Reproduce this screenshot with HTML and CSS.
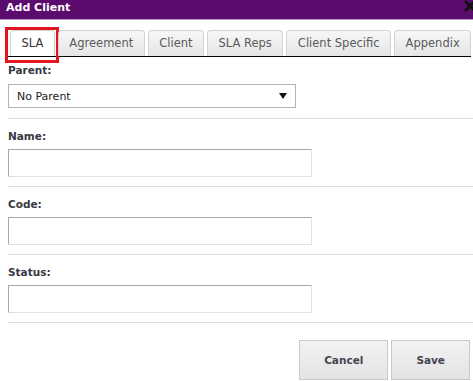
FILE: index.html
```html
<!DOCTYPE html>
<html lang="en">
<head>
    <meta charset="UTF-8">
    <meta name="viewport" content="width=device-width, initial-scale=1.0">
    <title>Add Client</title>
    <link rel="stylesheet" href="styles.css">
</head>
<body>
<!-- Barra de titulo -->
<div class="dialog-header">
    <span class="dialog-title">Add Client</span>
    <svg class="dialog-close" width="12" height="12" viewBox="0 0 12 12" aria-label="Close">
        <path d="M2 2 L10 10 M10 2 L2 10" stroke="#111111" stroke-width="3" stroke-linecap="square"/>
    </svg>
</div>

<!-- Abas -->
<div class="tabs">
    <div class="tab active">SLA<span class="highlight"></span></div>
    <div class="tab">Agreement</div>
    <div class="tab">Client</div>
    <div class="tab">SLA Reps</div>
    <div class="tab">Client Specific</div>
    <div class="tab">Appendix</div>
</div>

<!-- Campos -->
<form class="form">
    <div class="field first">
        <label class="field-label" for="parent">Parent:</label>
        <div class="select-wrap">
            <select id="parent" class="field-select">
                <option>No Parent</option>
            </select>
        </div>
    </div>
    <div class="field">
        <label class="field-label" for="name">Name:</label>
        <input id="name" class="field-input" type="text">
    </div>
    <div class="field">
        <label class="field-label" for="code">Code:</label>
        <input id="code" class="field-input" type="text">
    </div>
    <div class="field">
        <label class="field-label" for="status">Status:</label>
        <input id="status" class="field-input" type="text">
    </div>

    <div class="actions">
        <button type="button" class="btn">Cancel</button>
        <button type="button" class="btn">Save</button>
    </div>
</form>
</body>
</html>
```

FILE: styles.css
```css
body {
    margin: 0;
    padding: 0;
    font-family: "DejaVu Sans", Verdana, sans-serif;
    background-color: #FFFFFF;
    overflow: hidden;
}

/* Barra de titulo roxa */
.dialog-header {
    position: relative;
    height: 19px;
    padding: 0 6px;
    background-color: #5b0a6d;
    border-bottom: 1px solid #b995c4;
}

.dialog-title {
    display: block;
    line-height: 15px;
    font-size: 11px;
    font-weight: bold;
    color: #FFFFFF;
}

.dialog-close {
    position: absolute;
    top: 0;
    right: -3px;
}

/* Abas */
.tabs {
    display: flex;
    gap: 3px;
    margin: 10px 2px 0 5px;
    padding-left: 5px;
    border-bottom: 1px solid #000000;
}

.tab {
    position: relative;
    flex-shrink: 0;
    height: 25px;
    padding: 0 10.5px;
    line-height: 25px;
    font-size: 11.5px;
    white-space: nowrap;
    color: #5a5a5a;
    border: 1px solid #d2d2d2;
    border-bottom: none;
    border-radius: 4px 4px 0 0;
    background: linear-gradient(#f7f7f7, #e5e5e5);
}

.tab.active {
    background: #FFFFFF;
    color: #333333;
}

/* Marca vermelha em volta da aba ativa */
.highlight {
    position: absolute;
    top: -4px;
    left: -6px;
    width: 48px;
    height: 30px;
    border: 3px solid #e2161f;
}

/* Formulario */
.form {
    margin: 0;
    padding-left: 8px;
}

.field {
    padding: 10px 0 9px;
    border-bottom: 1px solid #dddddd;
}

.field.first {
    padding: 6px 0 10px;
}

.field-label {
    display: block;
    margin-bottom: 6px;
    line-height: 14px;
    font-size: 10.5px;
    font-weight: bold;
    color: #383844;
}

.field.first .field-label {
    margin-bottom: 7px;
}

.field-input {
    display: block;
    box-sizing: border-box;
    width: 304px;
    height: 28px;
    margin: 0;
    border: 1px solid;
    border-color: #a9a9a9 #e2e2e2 #e2e2e2 #a9a9a9;
    background: #FFFFFF;
}

.select-wrap {
    position: relative;
    width: 288px;
}

.select-wrap::after {
    content: "";
    position: absolute;
    top: 9px;
    right: 9px;
    border-left: 4px solid transparent;
    border-right: 4px solid transparent;
    border-top: 6px solid #111111;
}

.field-select {
    display: block;
    box-sizing: border-box;
    width: 288px;
    height: 24px;
    margin: 0;
    padding: 0 0 0 8px;
    font-family: "DejaVu Sans", Verdana, sans-serif;
    font-size: 11px;
    color: #222222;
    border: 1px solid #b4b4b4;
    border-radius: 0;
    background: #FFFFFF;
    appearance: none;
    -webkit-appearance: none;
}

/* Botoes */
.actions {
    display: flex;
    justify-content: flex-end;
    gap: 3px;
    margin-top: 17px;
    padding-right: 3px;
}

.btn {
    height: 40px;
    padding: 0 24px;
    font-family: "DejaVu Sans", Verdana, sans-serif;
    font-size: 10.5px;
    font-weight: bold;
    color: #444450;
    border: 1px solid #c9c9c9;
    background: linear-gradient(#f3f3f3, #e3e3e3);
    cursor: pointer;
}
```
